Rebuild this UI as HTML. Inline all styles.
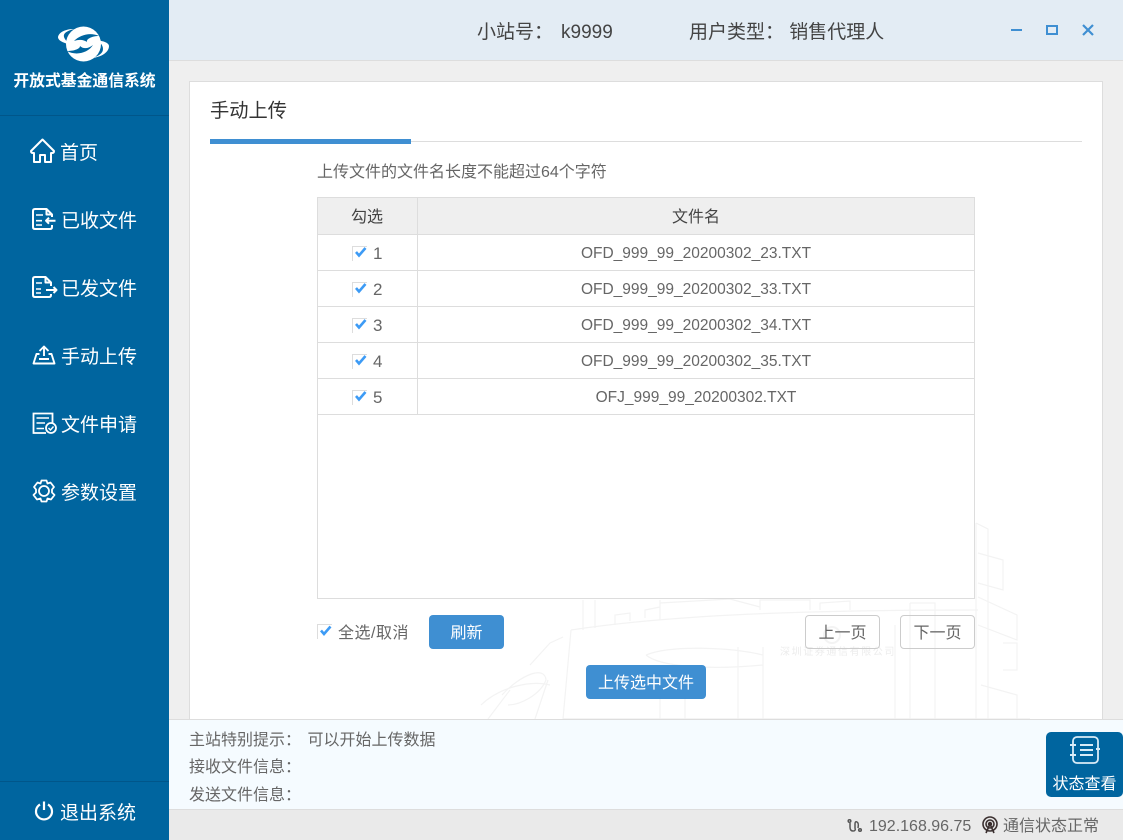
<!DOCTYPE html>
<html lang="zh-CN"><head><meta charset="utf-8"><title>开放式基金通信系统</title>
<style>
*{box-sizing:border-box;margin:0;padding:0}
html,body{width:1123px;height:840px;overflow:hidden;background:#efefef;font-family:"Liberation Sans","WenQuanYi Zen Hei","Noto Sans CJK SC",sans-serif;color:#666}
.a{position:absolute;white-space:nowrap}
.side{left:0;top:0;width:169px;height:840px;background:#00659f}
.nav{left:60px;color:#fff;font-size:19px;line-height:24px}
.row{left:318px;width:656px;height:36px;border-bottom:1px solid #ddd;font-size:15.5px;line-height:38px;color:#666}
.cell{position:absolute;left:99px;right:0;top:0;height:35px;border-left:1px solid #ddd;text-align:center}
.num{position:absolute;left:55px;top:0;font-size:17px}
.cb{position:absolute;left:34px;top:11px}
.btn{background:#3f8fd2;color:#fff;border-radius:4px;text-align:center;font-size:16px}
.btn2{border:1px solid #ccc;border-radius:4px;text-align:center;font-size:16px;color:#666}
.info{left:189px;font-size:16px;line-height:20px;color:#666}
</style></head><body>
<div class="a" style="left:169px;top:0;width:954px;height:61px;background:#e3ecf4;border-bottom:1px solid #ddd"></div>
<div class="a" style="left:477px;top:21px;font-size:19px;line-height:24px;color:#444">小站号：<span style="margin-left:8px">k9999</span></div>
<div class="a" style="left:689px;top:21px;font-size:19px;line-height:24px;color:#444">用户类型： 销售代理人</div>
<svg class="a" style="left:1005px;top:20px" width="100" height="20" fill="none" stroke="#3f8fd2" stroke-width="2"><path d="M6 10H17"/><rect x="42" y="6" width="10" height="8"/><path d="M78 5L88 15M88 5L78 15" stroke-width="2.2"/></svg>

<div class="a" style="left:189px;top:81px;width:914px;height:650px;background:#fff;border:1px solid #ddd"></div>
<svg class="a" style="left:470px;top:515px" width="632" height="204" fill="none" stroke="#f3f3f3" stroke-width="1.2">
<path d="M101 115C200 100 330 95 508 95"/><path d="M101 115L93 204"/>
<path d="M113 115V85M125 113V85M190 105V85M145 110V100L160 98V106M175 103V95L190 92"/>
<path d="M190 88L260 84L290 92M290 95V85H340V95M350 95V88L380 86V95"/>
<path d="M176 140C200 130 260 132 293 140M176 140C190 152 240 155 293 150M268 132V204M293 132V204M190 152V204M215 155V204"/>
<path d="M440 88H465V204M440 88V204M425 110V204"/>
<path d="M506 8L518 14V204M506 8V204M508 38L533 45V75L508 68M508 82L547 100V125L508 110M533 128H547V155H533M511 170L547 180V204"/>
<path d="M11 190C30 172 60 165 80 170M18 204L40 175M65 204L78 165M32 180C50 160 75 150 76 165C70 180 50 190 38 190M60 150L80 128M80 128L93 122"/>
<path d="M93 204H560" stroke="#eeeeee"/>
</svg>
<svg class="a" style="left:820px;top:624px" width="24" height="24" fill="none" stroke="#f3f3f3" stroke-width="2"><circle cx="12" cy="11" r="8"/></svg>
<div class="a" style="left:780px;top:647px;font-size:10px;line-height:12px;color:#ececec;letter-spacing:1.6px">深圳证券通信有限公司</div>
<div class="a" style="left:210px;top:99px;font-size:19.25px;line-height:26px;color:#333">手动上传</div>
<div class="a" style="left:210px;top:141px;width:872px;height:1px;background:#ddd"></div>
<div class="a" style="left:210px;top:139px;width:201px;height:5px;background:#3f8fd2"></div>
<div class="a" style="left:317px;top:163px;font-size:16px;line-height:20px;color:#666">上传文件的文件名长度不能超过64个字符</div>

<div class="a" style="left:317px;top:197px;width:658px;height:402px;border:1px solid #ddd;background:#fff"></div>
<div class="a row" style="top:198px;height:37px;background:#efefef;font-size:16px;color:#444;line-height:39px"><div style="position:absolute;left:0;width:98px;text-align:center">勾选</div><div class="cell" style="height:36px;color:#444">文件名</div></div>
<div class="a row" style="top:235px"><svg class="cb" width="15" height="15"><path d="M.5 15V.5H15" fill="none" stroke="#ddd"/><path d="M4 6L7 9.500L13.500 2" fill="none" stroke="#3d9bf5" stroke-width="2.6"/></svg><span class="num">1</span><div class="cell">OFD_999_99_20200302_23.TXT</div></div>
<div class="a row" style="top:271px"><svg class="cb" width="15" height="15"><path d="M.5 15V.5H15" fill="none" stroke="#ddd"/><path d="M4 6L7 9.500L13.500 2" fill="none" stroke="#3d9bf5" stroke-width="2.6"/></svg><span class="num">2</span><div class="cell">OFD_999_99_20200302_33.TXT</div></div>
<div class="a row" style="top:307px"><svg class="cb" width="15" height="15"><path d="M.5 15V.5H15" fill="none" stroke="#ddd"/><path d="M4 6L7 9.500L13.500 2" fill="none" stroke="#3d9bf5" stroke-width="2.6"/></svg><span class="num">3</span><div class="cell">OFD_999_99_20200302_34.TXT</div></div>
<div class="a row" style="top:343px"><svg class="cb" width="15" height="15"><path d="M.5 15V.5H15" fill="none" stroke="#ddd"/><path d="M4 6L7 9.500L13.500 2" fill="none" stroke="#3d9bf5" stroke-width="2.6"/></svg><span class="num">4</span><div class="cell">OFD_999_99_20200302_35.TXT</div></div>
<div class="a row" style="top:379px"><svg class="cb" width="15" height="15"><path d="M.5 15V.5H15" fill="none" stroke="#ddd"/><path d="M4 6L7 9.500L13.500 2" fill="none" stroke="#3d9bf5" stroke-width="2.6"/></svg><span class="num">5</span><div class="cell">OFJ_999_99_20200302.TXT</div></div>

<svg class="a" style="left:317px;top:624px" width="15" height="15"><path d="M.5 15V.5H15" fill="none" stroke="#ddd"/><path d="M4 6.500L7 10L13.500 2.500" fill="none" stroke="#3d9bf5" stroke-width="2.6"/></svg>
<div class="a" style="left:338px;top:624px;font-size:16px;line-height:20px;color:#666;letter-spacing:.5px">全选/取消</div>
<div class="a btn" style="left:429px;top:615px;width:75px;height:34px;line-height:38px">刷新</div>
<div class="a btn2" style="left:805px;top:615px;width:75px;height:34px;line-height:36px">上一页</div>
<div class="a btn2" style="left:900px;top:615px;width:75px;height:34px;line-height:36px">下一页</div>
<div class="a btn" style="left:586px;top:665px;width:120px;height:34px;line-height:38px">上传选中文件</div>

<div class="a" style="left:169px;top:719px;width:954px;height:91px;background:#f5fbff;border-top:1px solid #ddd;border-bottom:1px solid #ddd"></div>
<div class="a info" style="top:731px">主站特别提示： <span style="margin-left:2px">可以开始上传数据</span></div>
<div class="a info" style="top:758px">接收文件信息：</div>
<div class="a info" style="top:786px">发送文件信息：</div>
<div class="a" style="left:1046px;top:732px;width:77px;height:65px;background:#00659f;border-radius:5px"></div>
<svg class="a" style="left:1069px;top:736px" width="32" height="30" fill="none" stroke="#d9ecf8" stroke-width="1.8"><rect x="4" y="1" width="25" height="26" rx="4"/><path d="M11 9H24M11 14H24M11 19H24M1 9H7M1 19H7M27 13H31" stroke-width="1.9"/></svg>
<div class="a" style="left:1046px;top:774px;width:77px;text-align:center;color:#fff;font-size:16px;line-height:22px">状态查看</div>
<div class="a" style="left:169px;top:810px;width:954px;height:30px;background:#eaeaea"></div>
<svg class="a" style="left:847px;top:818px" width="16" height="16" fill="none" stroke="#555" stroke-width="1.5"><circle cx="2.500" cy="3" r="1.300"/><circle cx="13" cy="12" r="1.300"/><path d="M3 5V9Q3 13 6 13T8 10V6Q8 3 10 4T11 10"/></svg>
<div class="a" style="left:869px;top:816px;font-size:16px;line-height:22px;color:#666">192.168.96.75</div>
<svg class="a" style="left:981px;top:816px" width="18" height="18" fill="none" stroke="#3a2f2f" stroke-width="1.600"><circle cx="9" cy="8" r="7"/><circle cx="9" cy="8" r="4"/><path d="M9 8L5 17M9 8L13 17"/><circle cx="9" cy="8" r="1.400" fill="#3a2f2f"/></svg>
<div class="a" style="left:1003px;top:816px;font-size:16px;line-height:22px;color:#666">通信状态正常</div>

<div class="a side"></div>
<svg class="a" style="left:56px;top:24px" width="55" height="40">
<path d="M2 13C3 8 10 5 18 5C11 7 7 9 8 13C9 16 12 19 16 21C8 19 2 17 2 13Z" fill="#fff"/>
<path d="M53 22C53 28 46 33 36 34C43 32 47 29 47 25C47 21 44 18 40 16C48 17 53 19 53 22Z" fill="#fff"/>
<circle cx="27.500" cy="20" r="17.500" fill="#fff"/>
<path d="M43 12C34 8 24 11 18 17C24 15 28 16 31 18C30 15 36 12 43 12Z" fill="#00659f"/>
<path d="M11 27C20 32 32 29 37 21C32 25 27 25 24 22C24 25 18 27 11 27Z" fill="#00659f"/>
</svg>
<div class="a" style="left:0;top:72px;width:169px;text-align:center;color:#fff;font-size:15.8px;line-height:20px;font-weight:bold">开放式基金通信系统</div>
<div class="a" style="left:0;top:115px;width:169px;height:1px;background:#00568a"></div>
<svg class="a" style="left:30px;top:138px" width="26" height="26" fill="none" stroke="#fff" stroke-width="2" stroke-linejoin="round"><path d="M12.500 1.500L1 13Q1 15 3 15H4V24H10V17H15V24H21V15H22Q24 15 24 13Z"/></svg>
<div class="a nav" style="top:142px">首页</div>
<svg class="a" style="left:31px;top:208px" width="27" height="24" fill="none" stroke="#fff" stroke-width="2" stroke-linejoin="round"><path d="M21 9V6.500L15.500 1H4Q2 1 2 3V19Q2 21 4 21H19Q21 21 21 19V17"/><path d="M15.500 1V6.500H21"/><path d="M5 7H12M5 12.700H11M5 17H11" stroke-width="1.600"/><path d="M24.500 12.700H15M18 9.700L15 12.700L18 15.700"/></svg>
<div class="a nav" style="top:210px;left:61px">已收文件</div>
<svg class="a" style="left:31px;top:276px" width="27" height="24" fill="none" stroke="#fff" stroke-width="2" stroke-linejoin="round"><path d="M20 10V6.500L14.500 1H4Q2 1 2 3V19Q2 21 4 21H18Q20 21 20 19V18"/><path d="M14.500 1V6.500H20"/><path d="M5 7H11M5 13H10M5 17H10" stroke-width="1.600"/><path d="M15 14H25.500M22.500 11L25.500 14L22.500 17"/></svg>
<div class="a nav" style="top:278px;left:61px">已发文件</div>
<svg class="a" style="left:32px;top:344px" width="24" height="22" fill="none" stroke="#fff" stroke-width="1.900" stroke-linejoin="round"><path d="M7.500 10H4.500L1.500 19.500H22.500L19.500 10H16.500"/><path d="M7 15H17M12 12V3M7.500 7L12 2.500L16.500 7"/></svg>
<div class="a nav" style="top:346px;left:61px">手动上传</div>
<svg class="a" style="left:32px;top:412px" width="26" height="24" fill="none" stroke="#fff" stroke-width="1.800"><path d="M14 21H1.500V1.500H20.500V10.500"/><path d="M4.500 6H17M4.500 11H13M4.500 16.500H12" stroke-width="1.600"/><circle cx="19" cy="16" r="5"/><path d="M16.500 16L18.500 18L21.500 14.500" stroke-width="1.400"/></svg>
<div class="a nav" style="top:414px;left:61px">文件申请</div>
<svg class="a" style="left:32px;top:479px" width="24" height="24" fill="none" stroke="#fff" stroke-width="1.800" stroke-linejoin="round"><path d="M9.500 1.500H14.500L15.500 4.500L18.500 3.500L22 8L20 10.500V13.500L22.500 16L19 20.500L15.500 19.500L14.500 22.500H9.500L8.500 19.500L5 20.500L1.500 16L4 13.500V10.500L2 8L5.500 3.500L8.500 4.500Z"/><circle cx="12" cy="12" r="5"/></svg>
<div class="a nav" style="top:482px;left:61px">参数设置</div>
<div class="a" style="left:0;top:781px;width:169px;height:1px;background:#00568a"></div>
<svg class="a" style="left:34px;top:801px" width="20" height="20" fill="none" stroke="#fff" stroke-width="2.200"><path d="M6 3.500A8 8 0 1 0 14 3.500M10 0.500V9"/></svg>
<div class="a nav" style="top:802px;left:60px">退出系统</div>
</body></html>
